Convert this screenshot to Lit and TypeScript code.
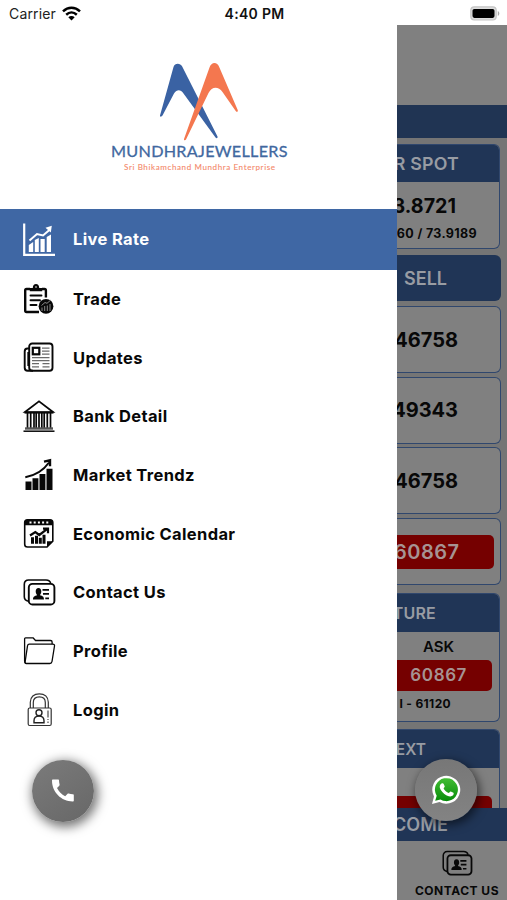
import { LitElement, html, css, svg } from "lit";
import { customElement, property } from "lit/decorators.js";

const contactIcon = svg`
  <path d="M5.5 22.5C3 22 1.3 20.5 1.3 18V5.5C1.3 3 3 1.3 5.5 1.3H23c2.4 0 4.2 1.2 4.7 3.4" fill="none" stroke="currentColor" stroke-width="1.6"/>
  <rect x="5.8" y="5.2" width="25.6" height="20.6" rx="3.6" fill="none" stroke="currentColor" stroke-width="1.9"/>
  <path d="M10 20.800c0-3 1.600-3.400 4.100-4.200-.4-1-1.400-1.700-1.400-3.700 0-2.200 1-3.500 2.800-3.500s2.800 1.300 2.800 3.500c0 2-1 2.700-1.300 3.700 2.600.8 4 1.200 4 4.200z" fill="currentColor"/>
  <path d="M19.500 11.200h6.500M20 15.200h6M22.300 19.600H26" stroke="currentColor" stroke-width="1.700"/>`;

const icons: Record<string, unknown> = {
  live: svg`<g fill="none" stroke="currentColor"><path d="M1.200 0v31.300H32" stroke-width="2.200"/><path d="M6.500 17 14 10.500l6 1.500 7-6" stroke-width="2"/></g>
    <path d="M22.500 4.200 28.800 2.300 27.800 9zM5.800 21.500l4.400-3V28.500H5.800zM11.800 16.500l4-2V28.500h-4zM17.500 15.500h4.200V28.500h-4.200zM23.700 13.500l4.300-2.500V28.500h-4.300z" fill="currentColor"/>`,
  trade: svg`<path d="M7 5.500H3.500c-1 0-1.300.5-1.300 1.300V27c0 1 .4 1.500 1.300 1.500H16M19 5.500h2.500c1 0 1.400.5 1.400 1.400v7" fill="none" stroke="currentColor" stroke-width="2.400"/>
    <path d="M6.800 7.800V4.500h3c0-2.600 1.300-4.100 3.200-4.100s3.200 1.500 3.200 4.100h3v3.300z" fill="currentColor"/><circle cx="13" cy="3.500" r=".8" fill="#fff"/>
    <path d="M7.500 12h11M7.500 16.800H17M7.500 21.500h6" stroke="currentColor" stroke-width="1.900" stroke-linecap="round"/>
    <circle cx="23" cy="22.800" r="7.400" fill="currentColor"/>
    <path d="M19 24v3.500M21.700 22.500v5M24.300 22v5.500M27 20.500v7M18.500 22l3.500-3 2 .8 3.500-3" fill="none" stroke="#888" stroke-width="1"/>`,
  updates: svg`<rect x="6.200" y="1.500" width="23.300" height="27.300" rx="3" fill="none" stroke="currentColor" stroke-width="1.900"/>
    <path d="M6.200 6.500H4.500c-2 0-2.800 1-2.800 3V25.800c0 2 1.300 3 3 3H10M5.300 10v14" fill="none" stroke="currentColor" stroke-width="1.900"/>
    <rect x="9.800" y="5.800" width="6.500" height="6.500" fill="none" stroke="currentColor" stroke-width="2.200"/>
    <path d="M19 6.200h7.500M19 9.200h7.500M19 12.200h7.500M9 15.600h17.500M9 18.600h17.500M9 21.600h7M19.500 21.600h7M9 24.800h7M19.500 24.800h7" stroke="currentColor" stroke-width="1.300" opacity=".6"/>`,
  bank: svg`<path d="M2 12 16 1.300 30 12z" fill="none" stroke="currentColor" stroke-width="1.700"/>
    <path d="M1.500 12.600h29" stroke="currentColor" stroke-width="2"/>
    <path d="M4.500 13v15M7.700 13v15M11 13v15M13.200 13v15M16 13v15M18.800 13v15M21.200 13v15M24.300 13v15M27.500 13v15" stroke="currentColor" stroke-width="1.700"/>
    <path d="M2 28.500h28" stroke="#555" stroke-width="2.400"/><path d="M.5 31.200h31" stroke="currentColor" stroke-width="1.500"/>`,
  trend: svg`<path d="M2.500 23h6v8.500h-6zM9.500 19.800h5.900v11.700H9.500zM16.500 15.500h5.900v16h-5.900zM23.500 10.200h6v21.300h-6z" fill="currentColor"/>
    <path d="M2.300 18.700C12 17 20 12.500 26 4" fill="none" stroke="currentColor" stroke-width="2"/>
    <path d="M21 3.200 27 1.800v6" fill="none" stroke="currentColor" stroke-width="2.400"/>`,
  calendar: svg`<path d="M24 28.800H4.500c-1.800 0-2.800-1-2.800-2.800V4.300C1.700 2.500 2.700 1.500 4.500 1.500H27c1.800 0 2.800 1 2.800 2.800V23z" fill="none" stroke="currentColor" stroke-width="1.600"/>
    <path d="M1.700 7V4c0-1.700.8-2.500 2.500-2.500h23c1.700 0 2.600.8 2.600 2.500v3zM24 28.800V23h5.800z" fill="currentColor"/>
    <path d="M6.500 4.200h19" stroke="#fff" stroke-width="2" stroke-dasharray="2 2.200"/>
    <path d="M9.500 19v6.500M13.500 17.500v8M17.300 19.500v6M21 16.500v9" stroke="currentColor" stroke-width="3"/>
    <path d="m7 17.300 5.300-3.500 4 3L24 11M20 10.500h5v4.500" fill="none" stroke="currentColor" stroke-width="2.200"/>`,
  contact: contactIcon,
  profile: svg`<g fill="none" stroke="currentColor" stroke-width="1.300" stroke-linejoin="round"><path d="M3 26.500C1.800 26 1.600 25 1.600 24V1.800c0-.7.300-1 1-1H10l2.500 2.700h15c1 0 1.600.5 1.600 1.400v2.300"/>
    <path d="M6.300 7.200h23.500c1.300 0 1.900.6 1.700 1.800L29 24.500c-.2 1.300-1 2-2.300 2H3.300c-1 0-1.400-.5-1.200-1.500L4.500 8.800c.2-1.100.7-1.600 1.800-1.600z"/></g>`,
  login: svg`<g fill="none" stroke="#333" stroke-width="1.200"><path d="M7.300 15V9.300C7.300 4 11 .800 16.300.800s9 3.200 9 8.500V15M10.300 15V9.600c0-3.500 2.400-5.700 6-5.700s6 2.200 6 5.700V15"/>
    <rect x="5.200" y="15" width="23" height="17.500" rx="1.500"/></g>
    <g fill="none" stroke="#222" stroke-width="1.400"><circle cx="16" cy="19.700" r="3"/><path d="M11 29.800v-2c0-2.800 2-4.700 5-4.700s5 1.900 5 4.700v2z"/><path d="M25 17.500v7M25 26v1M25 28.500v1.500" stroke="#666"/></g>`,
};

@customElement("menu-row")
class MenuRow extends LitElement {
  @property() label = "";
  @property() icon = "";
  @property({ type: Boolean, reflect: true }) active = false;
  static styles = css`
    :host { display: flex; align-items: center; height: 58.670px; padding-left: 23px; gap: 18px; color: #080808; box-sizing: border-box; }
    :host([active]) { height: 60.500px; background: #3f67a4; color: #fff; }
    svg { width: 32px; height: 33px; flex: none; overflow: visible; }
    span { font: 700 16.500px/20px Inter, sans-serif; letter-spacing: .35px; white-space: nowrap; padding-top: .2px; }
  `;
  render() {
    return html`<svg viewBox="0 0 32 33"><g transform=${this.offset}>${icons[this.icon]}</g></svg><span>${this.label}</span>`;
  }
  get offset() {
    const y: Record<string, number> = { live: 0.5, trade: 1.5, updates: 1, bank: 0, trend: 0.5, calendar: 1.2, contact: 2.7, profile: 3 };
    return `translate(0 ${y[this.icon] ?? 0})`;
  }
}

@customElement("app-root")
class AppRoot extends LitElement {
  static styles = css`
    :host { display: grid; grid-template: 25px 875px / 397px 110px; width: 507px; height: 900px; position: relative; overflow: hidden; background: #fff; font-family: Inter, sans-serif; }
    * { box-sizing: border-box; }
    .status { grid-column: 1 / 3; display: grid; grid-template-columns: 1fr auto 1fr; align-items: center; padding: 2px 7px 0 9px; font-size: 14px; color: #222; }
    .carrier { display: flex; align-items: center; gap: 6px; letter-spacing: .15px; }
    .time { font-weight: 600; color: #111; letter-spacing: .3px; }
    .battery { justify-self: end; display: block; }
    .drawer { background: #fff; }
    .logo { display: block; width: 397px; height: 184px; }
    .back { background: #757575; overflow: hidden; display: flex; flex-direction: column; font-weight: 600; color: #080808; white-space: nowrap; }
    .top { height: 80px; background: #808080; flex: none; }
    .band { height: 32.500px; background: #203453; flex: none; }
    .card { flex: none; margin-right: 7px; border: 1.500px solid #30476d; border-left: 0; border-radius: 0 6px 6px 0; background: #808080; overflow: hidden; }
    .head, .line { display: flex; align-items: center; justify-content: flex-end; }
    .head { background: #203556; color: #989ca3; }
    .spot { height: 104.500px; margin-top: 6.500px; }
    .spot .head { height: 37px; font-size: 17.800px; padding-right: 40px; letter-spacing: .2px; }
    .spot .rate { height: 48px; padding-right: 43px; font-size: 19.700px; font-weight: 700; }
    .spot .range { height: 7px; padding: 0 22px 0 0; font-size: 12.500px; letter-spacing: .35px; font-weight: 700; }
    .sell { height: 46px; margin: 6.500px 6px 5px 0; border-radius: 0 6px 6px 0; font-size: 18px; padding-right: 54px; flex: none; }
    .row { height: 67px; margin: 0 6px 3.700px 0; display: flex; align-items: center; justify-content: flex-end; font-size: 20px; font-weight: 700; padding: 0 42px 0 0; }
    .row.hot { padding: 0 6.500px 0 0; font-weight: 600; font-size: 20px; }
    .red { background: #750000; color: #a69393; border-radius: 0 5px 5px 0; width: 100%; display: flex; align-items: center; justify-content: flex-end; }
    .hot .red { height: 34px; padding-right: 34px; letter-spacing: .5px; }
    .future { height: 129px; margin-top: 4.500px; }
    .future .head { height: 37.500px; font-size: 16px; padding-right: 63px; letter-spacing: .2px; }
    .ask { height: 28px; font-size: 15px; padding: 2px 45px 0 0; }
    .future .red { height: 31px; width: 95px; font-size: 17px; padding-right: 25px; letter-spacing: .6px; }
    .high { height: 25px; font-size: 12px; padding-right: 48px; letter-spacing: .35px; font-weight: 700; }
    .next { height: 79px; margin-top: 7px; border-bottom: 0; border-radius: 0 6px 0 0; }
    .next .head { height: 37.500px; font-size: 15.500px; padding-right: 73px; }
    .next .red { height: 20px; width: 95px; margin-top: 28px; }
    .welcome { height: 33px; font-size: 18px; padding-right: 59px; flex: none; letter-spacing: .1px; }
    .tab { flex: none; height: 60px; background: #808080; display: flex; flex-direction: column; align-items: center; padding: 9px 0 0 10px; font-size: 12px; font-weight: 700; gap: 6px; letter-spacing: .5px; }
    .tab svg { width: 31px; height: 27px; flex: none; }
    .tab span { line-height: 15px; }
    .fab { position: absolute; width: 62px; height: 62px; border-radius: 50%; display: grid; place-items: center; }
    .phone { left: 32px; top: 760px; background: linear-gradient(145deg, #7b7b7b, #676767); box-shadow: 2px 3px 11px 2px rgba(0,0,0,.55); }
    .chat { left: 415px; top: 759px; background: linear-gradient(#777, #838383); box-shadow: 2px 3px 10px 1px rgba(0,0,0,.55); }
  `;
  render() {
    return html`
      <header class="status">
        <div class="carrier"><span>Carrier</span><svg width="19" height="15" viewBox="0 0 19 15"><g fill="none" stroke="#000" stroke-width="2.500"><path d="M1 5.300c5-4.700 12-4.700 17 0M4.200 8.700c3.200-2.900 7.400-2.900 10.600 0"/></g><path d="M6.300 11.300c1.900-1.700 4.500-1.700 6.400 0L9.500 14.500z"/></svg></div>
        <div class="time">4:40 PM</div>
        <svg class="battery" width="30" height="15" viewBox="0 0 30 15"><rect x=".8" y=".8" width="25.400" height="13.200" rx="3.500" fill="#ddd" stroke="#c5c5c5" stroke-width="1.200"/><rect x="2.500" y="2.900" width="22" height="9" rx="1.800"/><path d="M27.800 5c2 .9 2 4 0 4.900z" fill="#aaa"/></svg>
      </header>
      <nav class="drawer">
        <svg class="logo" viewBox="0 25 397 184">
          <path fill="#3a62a3" d="M160 115.500 173.500 67c1.200-4 6.500-4.500 8.700-.500L217.500 136.500c.5 1.500-1 2.300-2 1L183.500 93.500c-3-4.200-6.500-4.200-9.500 0L162.500 115.500c-1 1.700-3 1.300-2.500 0z"/>
          <path fill="#f4774f" d="M184 139 209.500 67.500c1.800-6 7.800-6 9.700-.500L237.700 110c.6 1.800-.8 2.600-2 1L222.500 92c-4.500-6-10.500-5.500-14 1L186 139.500c-.7 1.300-2.400.8-2-.500z"/>
          <text x="111" y="156.800" font-family="Lato, sans-serif" font-size="16.200" fill="#41689f" stroke="#41689f" stroke-width=".3" textLength="176.500">MUNDHRAJEWELLERS</text>
          <text x="124" y="169.500" font-family="Lato, sans-serif" font-size="8" fill="#f4886a" stroke="#f4886a" stroke-width=".1" textLength="151">Sri Bhikamchand Mundhra Enterprise</text>
        </svg>
        <menu-row active icon="live" label="Live Rate"></menu-row>
        <menu-row icon="trade" label="Trade"></menu-row>
        <menu-row icon="updates" label="Updates"></menu-row>
        <menu-row icon="bank" label="Bank Detail"></menu-row>
        <menu-row icon="trend" label="Market Trendz"></menu-row>
        <menu-row icon="calendar" label="Economic Calendar"></menu-row>
        <menu-row icon="contact" label="Contact Us"></menu-row>
        <menu-row icon="profile" label="Profile"></menu-row>
        <menu-row icon="login" label="Login"></menu-row>
      </nav>
      <main class="back">
        <div class="top"></div>
        <div class="band"></div>
        <section class="card spot"><div class="head">R SPOT</div><div class="line rate">3.8721</div><div class="line range">60 / 73.9189</div></section>
        <div class="head sell">SELL</div>
        <div class="card row">46758</div>
        <div class="card row">49343</div>
        <div class="card row">46758</div>
        <div class="card row hot"><div class="red">60867</div></div>
        <section class="card future"><div class="head">TURE</div><div class="line ask">ASK</div><div class="red">60867</div><div class="line high">I - 61120</div></section>
        <section class="card next"><div class="head">EXT</div><div class="red"></div></section>
        <div class="head welcome">COME</div>
        <footer class="tab"><svg viewBox="0 0 33 28">${contactIcon}</svg><span>CONTACT US</span></footer>
      </main>
      <div class="fab phone"><svg width="24" height="24" viewBox="0 0 24 24"><path fill="#fff" d="M1 1.500c0-.6.400-1 1-1h5c.6 0 1 .4 1 1 0 1.400.3 2.800.6 4.100.1.400 0 .8-.3 1.100L6 9c1.800 3.600 4.600 6.400 8.200 8.200l2.400-2.400c.3-.3.700-.4 1.100-.2 1.300.4 2.600.6 4 .6.700 0 1.100.4 1.100 1v5.200c0 .6-.4 1-1.100 1C10.300 22.400 1 13.100 1 1.500z"/></svg></div>
      <div class="fab chat"><svg width="30" height="30" viewBox="0 0 30 30"><defs><linearGradient id="g" x2="0" y2="1"><stop stop-color="#43bd35"/><stop offset="1" stop-color="#078c09"/></linearGradient></defs><path fill="#fff" d="M1 29 3 21.500A14 14 0 1 1 8.500 27z"/><path fill="url(#g)" d="m4.200 25.800 1.500-5a11.500 11.500 0 1 1 3.800 3.700z"/><path fill="#fff" d="M10.500 8.500c.9-.5 1.800-.5 2.200.4l1 2.400c.3.700-1.100 1.800-1.100 2.300 1.200 2.200 2.900 3.500 5.100 4.400.6-.1 1.400-1.800 2.100-1.500l2.600 1.200c.6.400.2 2.200-.6 2.900-1.400 1.200-3.400 1-6.100-.2-3.300-1.500-6-4.600-6.800-7.300-.5-1.800.2-3.700 1.600-4.600z"/></svg></div>`;
  }
}
